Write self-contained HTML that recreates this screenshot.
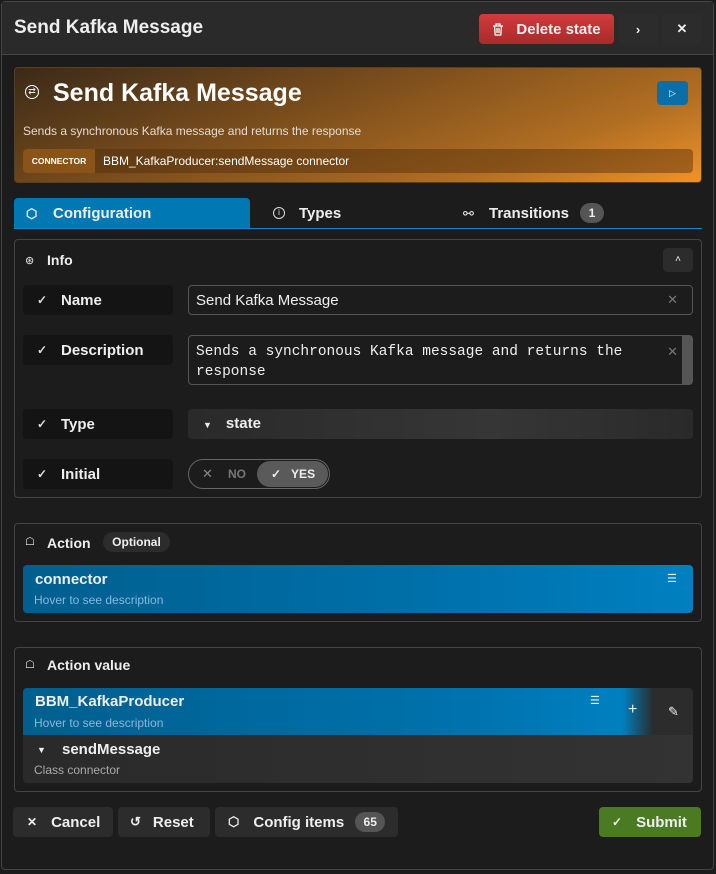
<!DOCTYPE html>
<html><head><style>
*{box-sizing:border-box;margin:0;padding:0}
body{width:716px;height:874px;background:#1c1c1c;font-family:"Liberation Sans",sans-serif;color:#eee;position:relative;overflow:hidden}
.a{position:absolute}
.b{font-weight:bold}
.frame{left:1px;top:1px;width:713px;height:869px;border:1px solid #444;border-radius:4px;background:#1c1c1c}
.hdr{left:2px;top:2px;width:711px;height:53px;background:#2a2a2a;border-bottom:1px solid #444}
.btn{border-radius:4px;background:#2c2c2c;display:flex;align-items:center;font-weight:bold;font-size:15px;color:#eee}
.box{border:1px solid #444;border-radius:4px}
.lbl{left:23px;width:150px;height:30px;background:#141414;border-radius:4px;font-size:15px;font-weight:bold;display:flex;align-items:center}
.lbl span.c{width:38px;text-align:center;font-size:12px;color:#ddd}
</style></head><body>
<div class="a frame"></div>
<div class="a hdr"></div>
<div class="a b" style="left:14px;top:17px;font-size:19px">Send Kafka Message</div>
<div class="a btn" style="left:479px;top:14px;width:135px;height:30px;background:linear-gradient(#d33b3b,#a82a2a);justify-content:center;gap:12px"><svg width="12" height="13" viewBox="0 0 12 13"><path d="M1 3h10M4 3V1h4v2M2.5 3l.7 9h5.6l.7-9M5 5v5M7 5v5" stroke="#fff" fill="none" stroke-width="1.3"/></svg>Delete state</div>
<div class="a btn" style="left:618px;top:14px;width:40px;height:30px;justify-content:center;font-size:13px">›</div>
<div class="a btn" style="left:662px;top:14px;width:40px;height:30px;justify-content:center;font-size:13px">✕</div>

<div class="a" style="left:14px;top:67px;width:688px;height:116px;border-radius:4px;background:linear-gradient(160deg,#3b2a18 0%,#7a4d1c 40%,#b06e22 75%,#f0922a 100%);border:1px solid #5a4020"></div>
<div class="a" style="left:25px;top:85px;width:14px;height:14px;border:1.5px solid #fff;border-radius:50%;font-size:9px;text-align:center;line-height:11px">⇄</div>
<div class="a b" style="left:53px;top:79px;font-size:25px;color:#fff">Send Kafka Message</div>
<div class="a" style="left:657px;top:81px;width:31px;height:24px;background:#0a6fa8;border-radius:4px;color:#fff;font-size:9px;text-align:center;line-height:24px">▷</div>
<div class="a" style="left:23px;top:124px;font-size:12px;color:#e6dccf">Sends a synchronous Kafka message and returns the response</div>
<div class="a" style="left:23px;top:149px;width:670px;height:24px;background:rgba(80,45,10,.45);border-radius:4px"></div>
<div class="a b" style="left:23px;top:149px;width:72px;height:24px;background:#8a5418;border-radius:4px 0 0 4px;font-size:8.5px;line-height:24px;text-align:center;color:#fff">CONNECTOR</div>
<div class="a" style="left:103px;top:154px;font-size:12px;color:#fff">BBM_KafkaProducer:sendMessage connector</div>

<div class="a" style="left:14px;top:198px;width:236px;height:30px;background:#0078b4;border-radius:4px 4px 0 0"></div>
<div class="a" style="left:14px;top:228px;width:688px;height:1px;background:#0a8ad0"></div>
<div class="a b" style="left:26px;top:206px;font-size:13px">⬡</div>
<div class="a b" style="left:53px;top:205px;font-size:15px">Configuration</div>
<div class="a" style="left:273px;top:207px;width:12px;height:12px;border:1.3px solid #ddd;border-radius:50%;font-size:8px;text-align:center;line-height:10px">i</div>
<div class="a b" style="left:299px;top:205px;font-size:15px">Types</div>
<div class="a" style="left:463px;top:206px;font-size:13px">⚯</div>
<div class="a b" style="left:489px;top:205px;font-size:15px">Transitions</div>
<div class="a b" style="left:580px;top:203px;width:24px;height:20px;background:#555;border-radius:10px;font-size:12px;text-align:center;line-height:20px">1</div>

<div class="a box" style="left:14px;top:239px;width:688px;height:259px"></div>
<div class="a" style="left:25px;top:254px;font-size:11px">⊛</div>
<div class="a b" style="left:47px;top:252px;font-size:14px">Info</div>
<div class="a" style="left:663px;top:248px;width:30px;height:24px;background:#2c2c2c;border-radius:4px;font-size:10px;text-align:center;line-height:24px">˄</div>

<div class="a lbl" style="top:285px"><span class="c">✓</span>Name</div>
<div class="a box" style="left:188px;top:285px;width:505px;height:30px;border-color:#555;font-size:15px;padding:6px 7px">Send Kafka Message<span style="position:absolute;right:14px;top:6px;color:#777;font-size:13px">✕</span></div>
<div class="a lbl" style="top:335px"><span class="c">✓</span>Description</div>
<div class="a box" style="left:188px;top:335px;width:505px;height:50px;border-color:#555;font-family:'Liberation Mono',monospace;font-size:14.5px;line-height:20px;padding:6px 7px">Sends a synchronous Kafka message and returns the response<span style="position:absolute;right:14px;top:6px;color:#777;font-size:13px;font-family:'Liberation Sans'">✕</span><span style="position:absolute;right:0;top:0;width:10px;height:48px;background:#555"></span></div>
<div class="a lbl" style="top:409px"><span class="c">✓</span>Type</div>
<div class="a" style="left:188px;top:409px;width:505px;height:30px;background:linear-gradient(90deg,#2a2a2a,#363636 60%,#2a2a2a);border-radius:4px;font-size:15px;font-weight:bold;padding:6px 0 0 15px"><span style="font-size:9px;margin-right:14px">▼</span>state</div>
<div class="a lbl" style="top:459px"><span class="c">✓</span>Initial</div>
<div class="a" style="left:188px;top:459px;width:142px;height:30px;border:1px solid #666;border-radius:15px"></div>
<div class="a" style="left:202px;top:466px;color:#888;font-size:13px">✕</div>
<div class="a b" style="left:228px;top:467px;color:#777;font-size:12px">NO</div>
<div class="a" style="left:257px;top:461px;width:71px;height:26px;background:#5a5a5a;border-radius:13px;font-size:12px;font-weight:bold;padding:6px 0 0 14px">✓ &nbsp;&nbsp;YES</div>

<div class="a box" style="left:14px;top:523px;width:688px;height:99px"></div>
<div class="a" style="left:25px;top:535px;font-size:11px">☖</div>
<div class="a b" style="left:47px;top:535px;font-size:14px">Action</div>
<div class="a b" style="left:103px;top:532px;width:67px;height:20px;background:#2c2c2c;border-radius:10px;font-size:12px;text-align:center;line-height:20px">Optional</div>
<div class="a" style="left:23px;top:565px;width:670px;height:48px;background:linear-gradient(90deg,#005f8e,#0070aa 60%,#0080c0);border-radius:4px"></div>
<div class="a b" style="left:35px;top:571px;font-size:15px">connector</div>
<div class="a" style="left:34px;top:593px;font-size:12px;color:#8ab8d8">Hover to see description</div>
<div class="a" style="left:667px;top:572px;font-size:11px">☰</div>

<div class="a box" style="left:14px;top:647px;width:688px;height:145px"></div>
<div class="a" style="left:25px;top:658px;font-size:11px">☖</div>
<div class="a b" style="left:47px;top:657px;font-size:14px">Action value</div>
<div class="a" style="left:23px;top:688px;width:631px;height:47px;background:linear-gradient(90deg,#005f8e,#0072ad 70%,#0080c0 95%,#2a2a2a);border-radius:4px 0 0 0"></div>
<div class="a" style="left:654px;top:688px;width:39px;height:47px;background:#2c2c2c;border-radius:0 4px 0 0;font-size:13px;text-align:center;line-height:47px">✎</div>
<div class="a b" style="left:35px;top:693px;font-size:15px">BBM_KafkaProducer</div>
<div class="a" style="left:34px;top:716px;font-size:12px;color:#8ab8d8">Hover to see description</div>
<div class="a" style="left:590px;top:694px;font-size:11px">☰</div>
<div class="a" style="left:628px;top:701px;font-size:16px">+</div>
<div class="a" style="left:23px;top:735px;width:670px;height:48px;background:linear-gradient(90deg,#2a2a2a,#333);border-radius:0 0 4px 4px"></div>
<div class="a" style="left:37px;top:745px;font-size:9px">▼</div>
<div class="a b" style="left:62px;top:741px;font-size:15px">sendMessage</div>
<div class="a" style="left:34px;top:763px;font-size:12px;color:#aaa">Class connector</div>

<div class="a btn" style="left:13px;top:807px;width:100px;height:30px;padding-left:14px"><span style="font-size:12px;margin-right:14px">✕</span>Cancel</div>
<div class="a btn" style="left:118px;top:807px;width:92px;height:30px;padding-left:12px"><span style="font-size:13px;margin-right:12px">↺</span>Reset</div>
<div class="a btn" style="left:215px;top:807px;width:183px;height:30px;padding-left:13px"><span style="font-size:13px;margin-right:14px">⬡</span>Config items<span style="margin-left:11px;width:30px;height:20px;background:#555;border-radius:10px;font-size:12px;text-align:center;line-height:20px">65</span></div>
<div class="a btn" style="left:599px;top:807px;width:102px;height:30px;background:#4a7a22;padding-left:13px"><span style="font-size:12px;margin-right:14px">✓</span>Submit</div>
</body></html>
